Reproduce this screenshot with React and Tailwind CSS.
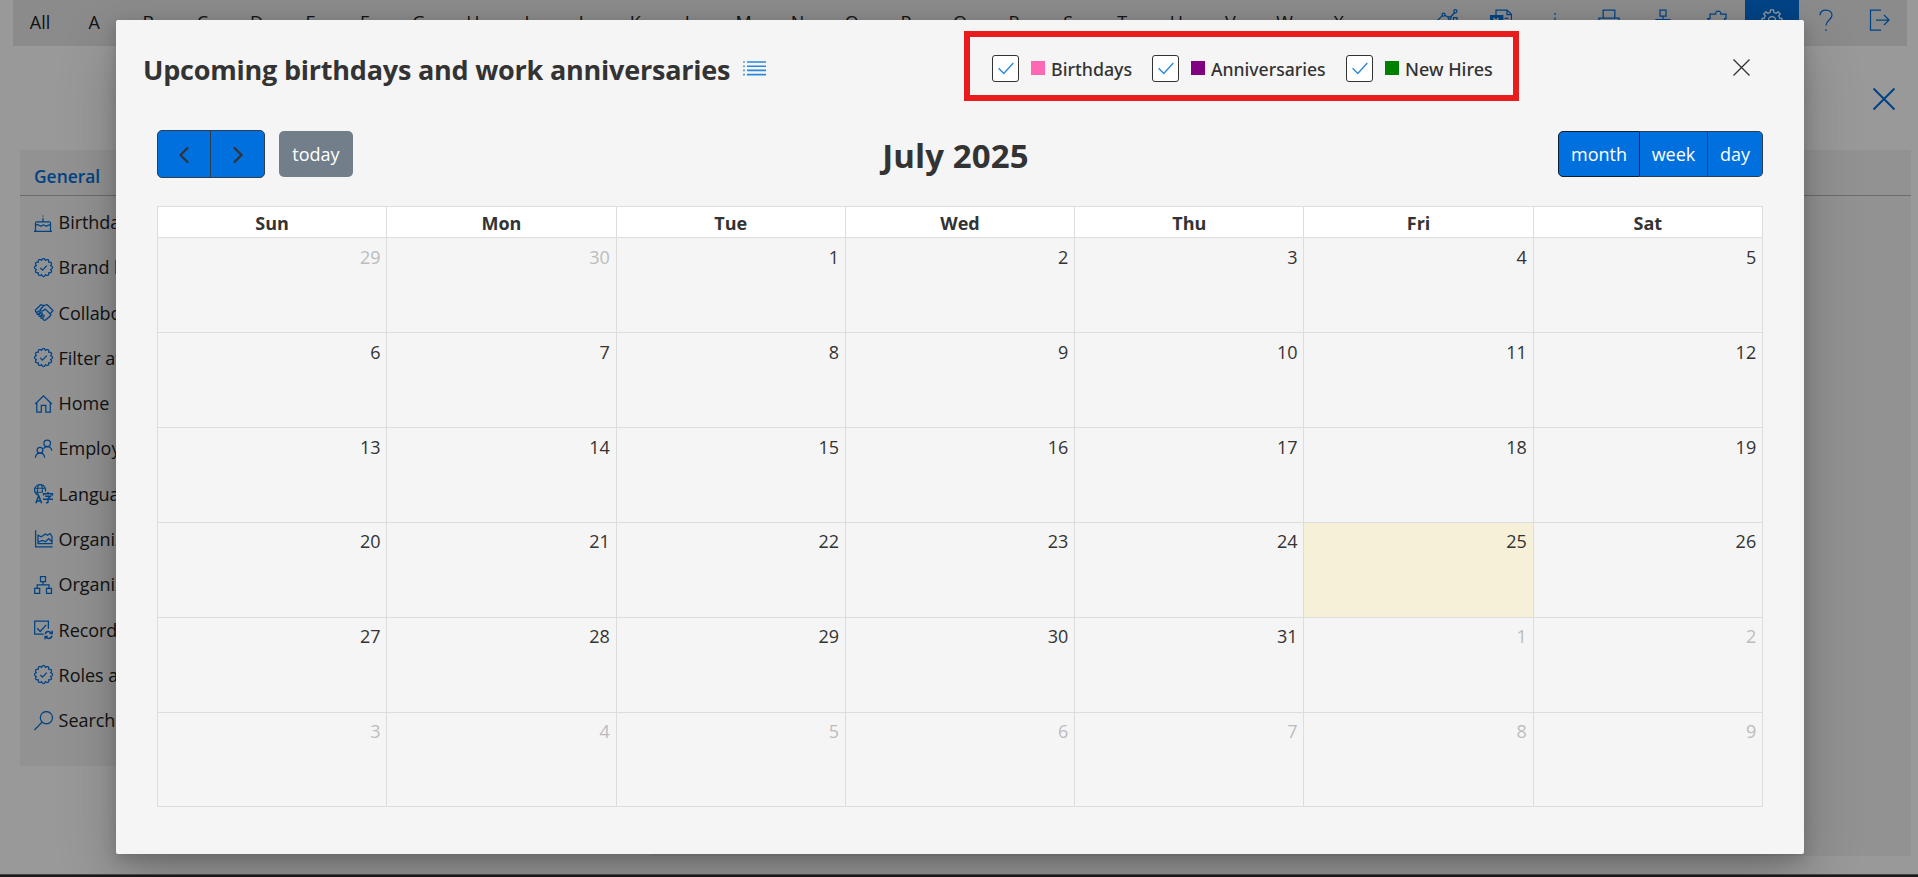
import React from "react";

const LETTERS = ["All", ..."ABCDEFGHIJKLMNOPQRSTUVWX".split("")];
const DAYS = ["Sun", "Mon", "Tue", "Wed", "Thu", "Fri", "Sat"];

function wave(cx, cy, r, amp, n) {
  const steps = n * 10;
  const pts = Array.from({ length: steps }, (_, i) => {
    const a = (i / steps) * Math.PI * 2;
    const rad = r + amp * (2 * Math.abs(Math.cos((n * a) / 2)) - 1);
    return `${(cx + rad * Math.cos(a)).toFixed(2)} ${(cy + rad * Math.sin(a)).toFixed(2)}`;
  });
  return `M${pts.join("L")}Z`;
}

function gear(cx, cy, ro, ri, n) {
  const out = [];
  for (let i = 0; i < n; i++) {
    const b = (i / n) * Math.PI * 2 - Math.PI / 2;
    const s = Math.PI / n;
    [[ri, -0.55], [ro, -0.4], [ro, 0.4], [ri, 0.55]].forEach(([r, k]) => {
      const a = b + k * s;
      out.push(`${(cx + r * Math.cos(a)).toFixed(2)} ${(cy + r * Math.sin(a)).toFixed(2)}`);
    });
  }
  return `M${out.join("L")}Z`;
}

const BADGE = wave(9.5, 9.5, 8.2, 0.85, 12);
const GEAR = gear(11, 11, 10.2, 7.9, 8);

function Icon({ children, size = 20, className = "" }) {
  return (
    <svg
      width={size}
      height={size}
      viewBox={`0 0 ${size} ${size}`}
      fill="none"
      stroke="currentColor"
      strokeWidth="1.25"
      className={`shrink-0 ${className}`}
    >
      {children}
    </svg>
  );
}

const icons = {
  cake: (
    <>
      <path d="M0 18.400h18M1.500 18.400V10.200c0-.8.6-1.400 1.400-1.400h12.200c.8 0 1.400.6 1.400 1.400v8.200M9 8.700V5M1.500 12.200c1.600-.8 2.900-.5 3.900.2 1 .8 2 .8 3 0 .8-.7 1.500-.7 2.300 0 1 .8 2.200.7 3.100 0 .8-.6 1.700-.7 2.700-.2" />
      <path d="M9 2.200v1.800" opacity="0.600" />
    </>
  ),
  badge: (
    <>
      <path d={BADGE} strokeLinejoin="round" />
      <path d="M6.200 9.900l2.300 2.300 4.300-4.600" />
    </>
  ),
  shake: (
    <>
      <path d="M1 7.500L6.800 1.700l3 1 3.400-1 5.800 5.800-2.600 3.200M1 7.500l2 2.500M9.800 2.700L6.200 6.500c.4 1.700 2 2 3.500.8l1.500-1.200 5.400 5.200c.8.9-.2 2.200-1.300 1.500M15.300 12.800c.7 1-.5 2.200-1.500 1.400M13.800 14.400c.3 1-.8 2-1.700 1.200M12 15.800c.1 1.300-1.400 1.900-2.200 1.100l-1.200-1.100" />
      <path d="M3.300 9.300l1-1c1-.9 2.300.3 1.500 1.300l-1.400 1.500c-1.100 1-2.500-.3-1.100-1.800zM5.200 11.500l1.400-1.400c1-.9 2.300.3 1.500 1.300l-1.500 1.600c-1.200 1-2.500-.3-1.400-1.500zM7.300 13.500l1.100-1.100c1-.9 2.300.3 1.500 1.300l-1.300 1.300c-1.100 1-2.400-.3-1.300-1.500z" />
    </>
  ),
  home: <path d="M1.200 10L9.500 1.800l8.300 8.200M2.800 8.600v9.400h4.500v-6.600h4.500v6.600h4.500V8.600" />,
  people: (
    <>
      <circle cx="13.200" cy="4.300" r="3.300" />
      <circle cx="6" cy="11.200" r="2.900" />
      <path d="M1.400 18.700c.3-2.800 1.900-4.600 4.600-4.600s4.400 1.800 4.700 4.600M9.500 9.600c.8-1.300 2-2 3.700-2 2.600 0 4.200 1.600 4.600 4" />
    </>
  ),
  language: (
    <>
      <path d="M11.400 7.500A5.500 5.500 0 1 0 4 11.200" />
      <path d="M.8 4.300h10.400M.8 8.300h8M4.600 .9c-1.400 3-1.400 6.500-.6 10M7.400 .9c1 2.300 1.300 4.700 1 7" strokeWidth="1.100" />
      <path d="M1.800 19.200l2.900-7.400 2.900 7.400M2.800 16.900h3.800" strokeWidth="1.500" />
      <path d="M9.600 11.400V9.700h8.800v1.700M14 8v1.700M11.200 12.300h5.400l-2.600 2.200v3.400c0 .8-.6 1-2 .9M9 15.200h10" strokeWidth="1.400" />
    </>
  ),
  area: <path d="M1.600 1.300v16.500h17M4 14.700V6.300l3.200 1.500L11.500 5l2 1.200L16 4.500l2 3v7.200zM4.400 13l4-1.600 3 1.400 3.400-3.200 3 3.200" />,
  org: <path d="M6.500 1.500h5v5h-5zM.7 13.400h5v5h-5zM12.500 13.400h5v5h-5zM9 6.500v3.300M3.200 13.400V9.800H15v3.600" />,
  record: (
    <>
      <path d="M9.700 14.200H.7V1h13.700v7.800M3.200 8.300l3 3.200 6-6.600" />
      <path d="M11.300 14.200c.3-1.600 1.400-2.600 2.900-2.600 1.300 0 2.200.7 2.900 1.600M18.200 10.800v2.700h-2.700M18 15.800c-.5 1.700-1.700 2.700-3.300 2.700-1.300 0-2.300-.7-2.900-1.600M11.100 19.300v-2.700h2.700" strokeWidth="1.500" />
    </>
  ),
  search: (
    <>
      <circle cx="12.400" cy="6.700" r="6.100" />
      <path d="M8 11.200L.3 19" />
    </>
  ),
};

const NAV = [
  ["cake", "Birthdays"],
  ["badge", "Brand logo"],
  ["shake", "Collaboration"],
  ["badge", "Filter attributes"],
  ["home", "Home"],
  ["people", "Employees"],
  ["language", "Languages"],
  ["area", "Organization"],
  ["org", "Organization"],
  ["record", "Records"],
  ["badge", "Roles and"],
  ["search", "Search"],
];

const TOOLS = [
  <>
    <path d="M1 12L6.500 6.600M8.700 6.300l4 2.200M14.600 8l4.400-4.700M1.500 21c0-6 3-9.500 8-9.500M17.500 8.500h3.500V21h-3.500zM11.500 13h3.500v8" />
    <circle cx="7.500" cy="5.700" r="1.500" />
    <circle cx="13.600" cy="8.900" r="1.400" />
    <circle cx="19.400" cy="2.300" r="1.600" />
  </>,
  <>
    <path d="M6 6V1h11l4.500 4.500V21H6v-3M17 1v4.500h4.500M14.500 9.300h4" />
    <path d="M.3 6.500h12.500v11H.3z" fill="currentColor" />
    <path d="M3.500 9l5 6M8.500 9l-5 6" stroke="#e6e6e6" strokeWidth="1.800" />
  </>,
  <path d="M11 4v2M11 8.500V19" />,
  <path d="M5.200 9V1h11.600v8M1 18V9h20v9h-4M5 14h12v7H5zM5 18H1" />,
  <path d="M8 1h6v6H8zM1 15h6v6H1zM15 15h6v6h-6zM11 7v3.500M4 15v-4.500h14V15" />,
  <path d="M2.500 9.500V21h16V9.500h1.500V5h-5.200c.8-3.800-6-3.800-5.200 0H4v4.500H1" />,
  <>
    <path d={GEAR} strokeLinejoin="round" />
    <circle cx="11" cy="11" r="3.500" />
  </>,
  <path d="M5 6.300C5 3 7.500 1 11 1s6 2.200 6 5.200c0 4.800-6 4.800-6 10.200M11 20.300v1.700" />,
  <path d="M12 1H1.500v20H12M7 11h13M15 6l5 5-5 5" />,
];

const WEEKS = [
  [29, 30, 1, 2, 3, 4, 5],
  [6, 7, 8, 9, 10, 11, 12],
  [13, 14, 15, 16, 17, 18, 19],
  [20, 21, 22, 23, 24, 25, 26],
  [27, 28, 29, 30, 31, 1, 2],
  [3, 4, 5, 6, 7, 8, 9],
];

function isOutside(week, day) {
  return (week === 0 && day > 20) || (week >= 4 && day < 20);
}

function LegendItem({ swatch, label, width, text }) {
  return (
    <label className={`flex h-[27px] items-center ${width}`}>
      <span className="flex h-[27px] w-[27px] items-center justify-center rounded-[3px] border border-[#333] bg-white">
        <svg width="16" height="13" viewBox="0 0 16 13" fill="none" stroke="#2b88d8" strokeWidth="1.4">
          <path d="M0.600 6.200l5.200 5.200L15.300 1" />
        </svg>
      </span>
      <span className={`-mt-px ml-3 h-3.5 w-[13.500px] ${swatch}`} />
      <span className={`ml-[6.500px] whitespace-nowrap font-['Noto_Sans'] font-medium leading-6 ${text}`}>{label}</span>
    </label>
  );
}

function Page() {
  return (
    <div className="h-full w-full bg-white">
      <nav className="ml-[13px] mr-[11px] flex h-[46px] bg-[#e8e8e8] text-[#222]">
        {LETTERS.map((l) => (
          <div key={l} className="w-[54.110px] shrink-0 pt-2 text-center text-[18px] leading-7">
            {l}
          </div>
        ))}
        <div className="w-[54.110px] shrink-0" />
        {TOOLS.map((t, i) => (
          <div
            key={i}
            className={`flex w-[54.110px] shrink-0 justify-center pt-[9px] ${
              i === 6 ? "bg-[#0070de] text-white" : "text-[#0070de]"
            }`}
          >
            <Icon size={22}>{t}</Icon>
          </div>
        ))}
      </nav>
      <div className="flex h-[104px] justify-end pr-[22px] pt-[41px]">
        <Icon size={24} className="text-[#0070de]">
          <path d="M1.500 1.500l21 21M22.500 1.500l-21 21" strokeWidth="2" />
        </Icon>
      </div>
      <div className="flex items-start pl-5 pr-[7px]">
        <section className="h-[616px] w-[630px] bg-[#f3f3f3]">
          <h2 className="h-[46px] border-b border-[#b4b4b4] pl-3.5 pt-[13px] text-[17.400px] font-semibold leading-[26px] text-[#0070de]">
            General
          </h2>
          <ul className="pt-[4px]">
            {NAV.map(([icon, label], i) => (
              <li key={i} className="flex h-[45.270px] items-center pl-3.5 text-[18px] tracking-[-0.050px] text-[#222]">
                <Icon className="text-[#0070de]">{icons[icon]}</Icon>
                <span className="ml-[4.600px]">{label}</span>
              </li>
            ))}
          </ul>
        </section>
        <section className="h-[706px] flex-1 bg-[#f3f3f3]">
          <div className="h-[46px] border-b border-[#b4b4b4]" />
        </section>
      </div>
    </div>
  );
}

function Calendar() {
  return (
    <div className="border-l border-t border-[#ddd]">
      <div className="grid grid-cols-7 bg-white">
        {DAYS.map((d) => (
          <div key={d} className="h-[31px] border-b border-r border-[#ddd] pt-px text-center text-[18px] font-bold leading-[30px]">
            {d}
          </div>
        ))}
      </div>
      {WEEKS.map((week, w) => (
        <div key={w} className={`grid grid-cols-7 ${w === 5 ? "h-[94px]" : "h-[95px]"}`}>
          {week.map((d) => (
            <div
              key={d}
              className={`border-b border-r border-[#ddd] pr-[5.800px] text-right text-[18px] leading-6 ${
                w < 3 ? "pt-[7px]" : "pt-1.5"
              } ${isOutside(w, d) ? "text-[#bcbcbc]" : "text-[#333]"} ${w === 3 && d === 25 ? "bg-[#f6f0d8]" : ""}`}
            >
              {d}
            </div>
          ))}
        </div>
      ))}
    </div>
  );
}

function Modal() {
  return (
    <div className="h-[834px] w-[1688px] rounded-[2px] bg-[#f5f5f5] pt-[11px] text-[#333] shadow-[0_25.600px_57.600px_rgba(0,0,0,0.22),0_4.800px_14.400px_rgba(0,0,0,0.18)]">
      <header className="flex h-[70px] items-center">
        <div className="flex w-[848px] items-center pl-[27px]">
          <h1 className="mt-2 w-[586px] whitespace-nowrap text-[27px] font-bold leading-9 tracking-[-0.220px]">
            Upcoming birthdays and work anniversaries
          </h1>
          <svg width="23" height="15" viewBox="0 0 23 15" fill="none" stroke="#2b88d8" strokeWidth="1.600" className="ml-3.5 mt-1">
            <path d="M0 1h2M0 5.200h2M0 9.400h2M0 13.600h2" opacity="0.800" />
            <path d="M4 1h19M4 5.200h19M4 9.400h19M4 13.600h19" />
          </svg>
        </div>
        <div className="flex h-[70px] w-[555px] items-center border-[6px] border-[#e81c1c] pl-[22px] pt-[5px]">
          <LegendItem swatch="bg-[#ff69b4]" label="Birthdays" width="w-40" text="text-[17.800px]" />
          <LegendItem swatch="bg-[#800080]" label="Anniversaries" width="w-[194px]" text="text-[17.600px]" />
          <LegendItem swatch="bg-[#008000]" label="New Hires" width="" text="text-[18px]" />
        </div>
        <svg width="17" height="17" viewBox="0 0 17 17" fill="none" stroke="#333" strokeWidth="1.300" className="ml-[214px] mt-0.5">
          <path d="M0.500 0.500l16 16M16.500 0.500l-16 16" />
        </svg>
      </header>

      <div className="px-[41px] pt-[29px]">
        <div className="mb-7 grid h-12 grid-cols-3 items-center">
          <div className="flex items-center">
            <div className="flex h-12 w-[108px] rounded-[5px] border border-[#2c3e50] bg-[#0070de]">
              <button className="flex w-[53px] items-center justify-center border-r border-[#2c3e50]">
                <svg width="12" height="18" viewBox="0 0 12 18" fill="none" stroke="#333" strokeWidth="2.200" strokeLinecap="round" className="mt-0.5">
                  <path d="M9.500 2L2.500 9l7 7" />
                </svg>
              </button>
              <button className="flex flex-1 items-center justify-center">
                <svg width="12" height="18" viewBox="0 0 12 18" fill="none" stroke="#333" strokeWidth="2.200" strokeLinecap="round" className="mt-0.5">
                  <path d="M2.500 2l7 7-7 7" />
                </svg>
              </button>
            </div>
            <button className="ml-3.5 h-[46px] w-[74px] rounded-[5px] bg-[#727f8b] text-[18px] text-white">today</button>
          </div>
          <h2 className="-ml-[9px] pt-1 text-center text-[33px] font-bold leading-10 tracking-[0.100px]">July 2025</h2>
          <div className="flex h-[46px] justify-self-end text-[18px] text-white">
            <button className="w-[82px] rounded-l-[5px] border border-[#151e27] bg-[#0070de]">month</button>
            <button className="w-[68px] border-y border-r border-[#2c3e50] bg-[#0070de]">week</button>
            <button className="w-[55px] rounded-r-[5px] border border-l-0 border-[#2c3e50] bg-[#0070de]">day</button>
          </div>
        </div>
        <Calendar />
      </div>
    </div>
  );
}

export default function App() {
  return (
    <div className="relative h-[877px] w-[1918px] overflow-hidden font-['Open_Sans',sans-serif]">
      <Page />
      <div className="absolute inset-0 flex justify-center bg-black/40 pl-0.5 pt-5">
        <Modal />
      </div>
      <div className="absolute inset-x-0 bottom-0 h-[3px] border-t border-[#444] bg-[#1c1719]" />
    </div>
  );
}
